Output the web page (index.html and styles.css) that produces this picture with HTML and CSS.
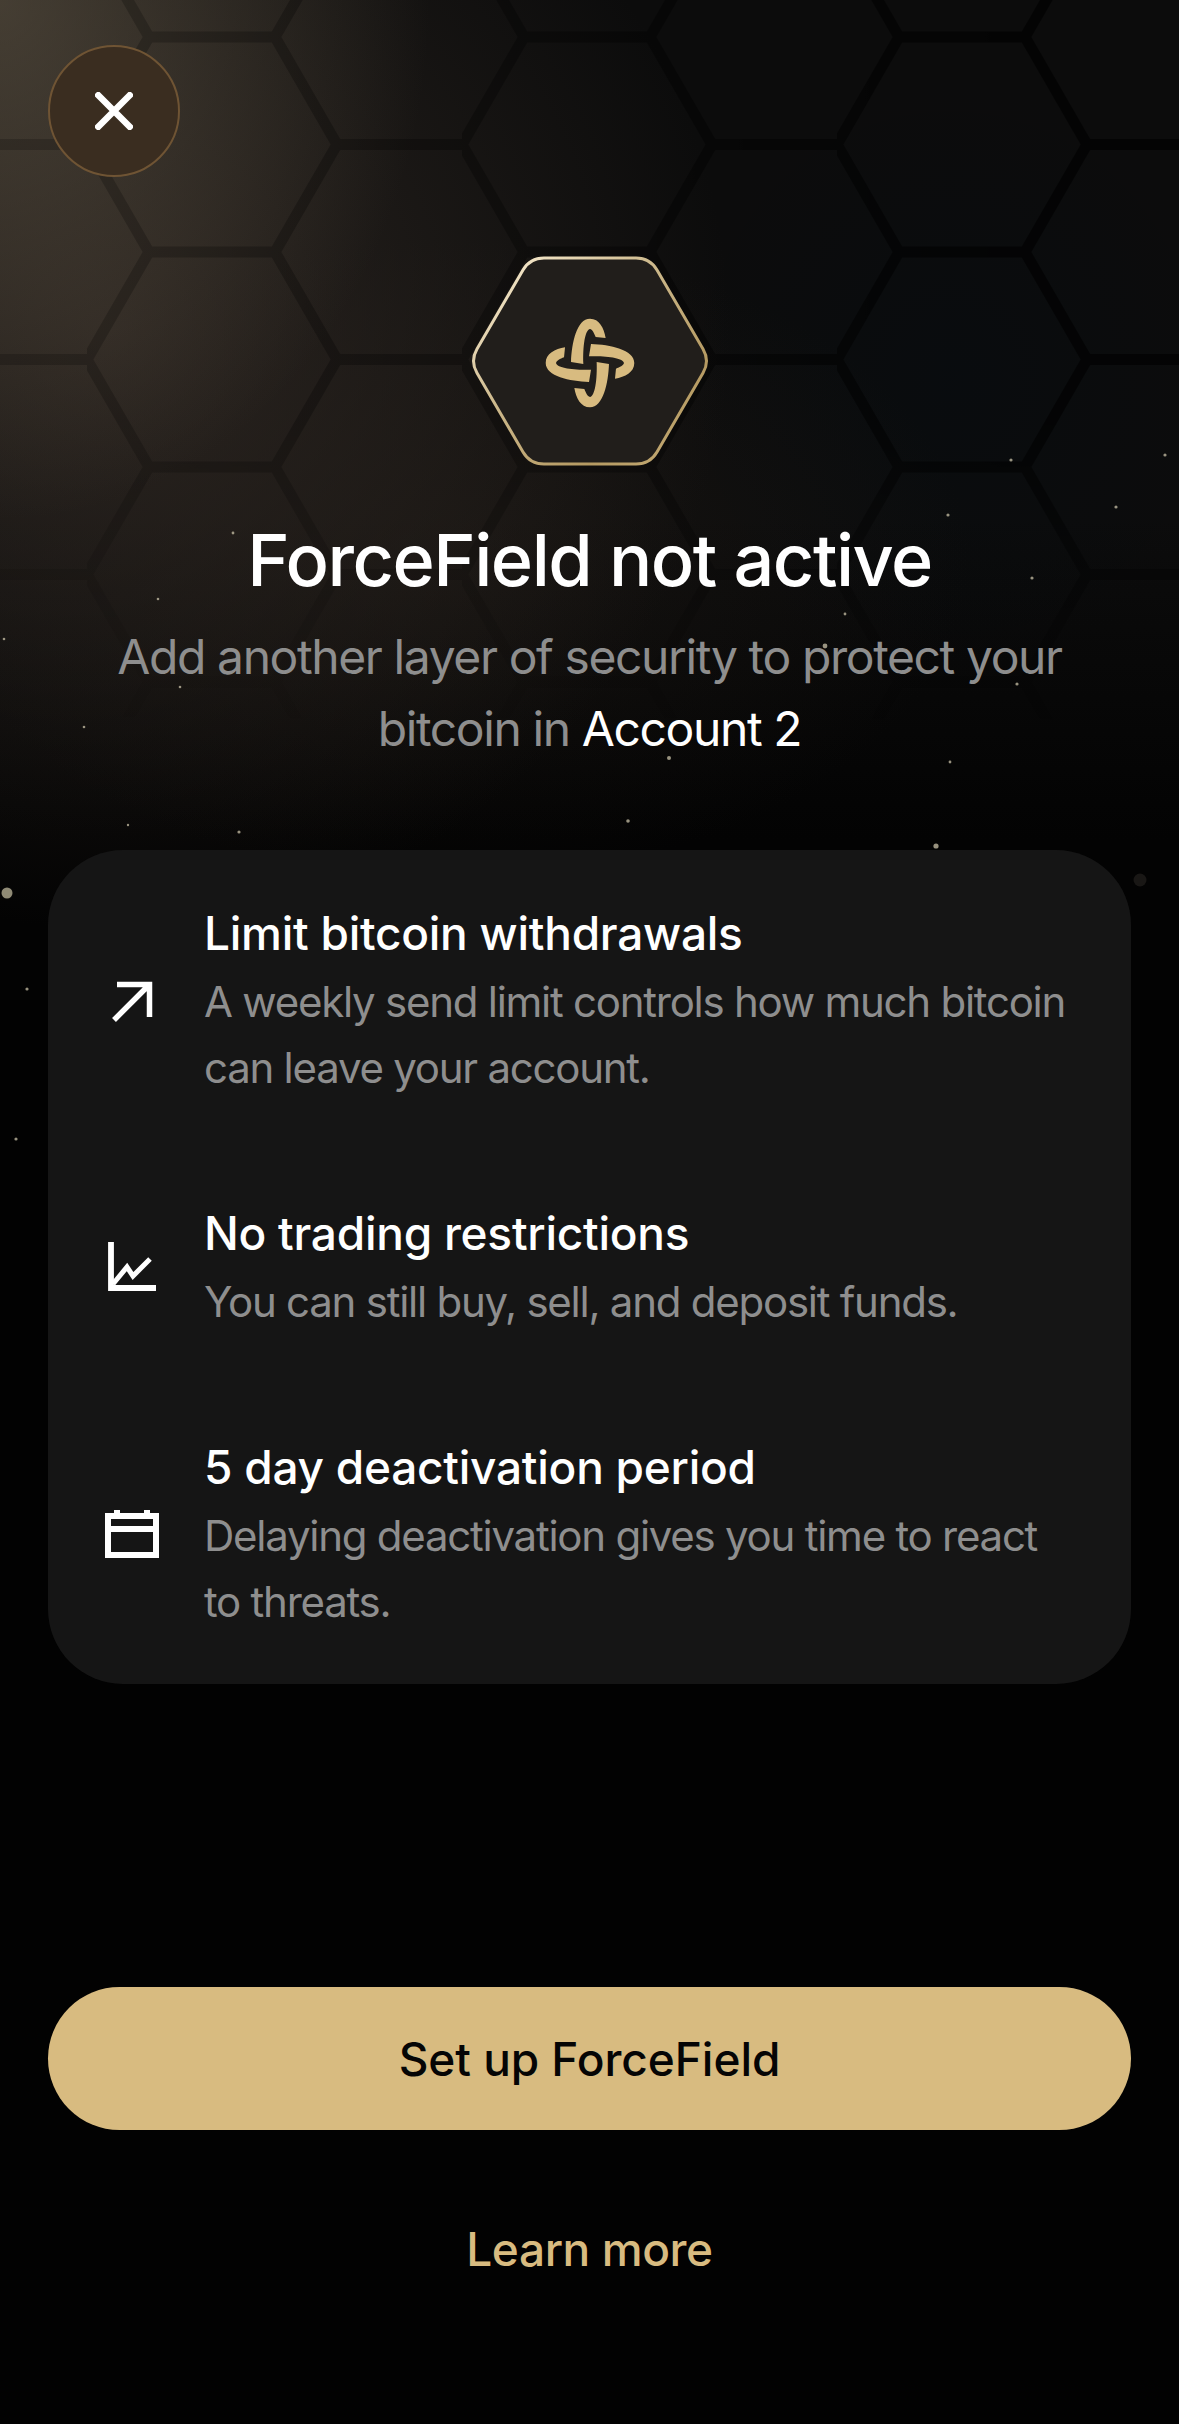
FILE: index.html
```html
<!DOCTYPE html>
<html>
<head>
	<meta charset="utf-8">
	<title>ForceField not active</title>
	<link rel="stylesheet" href="styles.css">
</head>
<body>
	<div class="glow"></div>
	<svg class="backdrop" width="1179" height="1200" viewBox="0 0 1179 1200">
		<defs>
			<pattern id="cells" width="375" height="215" patternUnits="userSpaceOnUse" patternTransform="translate(87 37)">
				<path d="M62 0L0 107.5L62 215M188 0L250 107.5L188 215M62 0H188M62 215H188M250 107.5H375" fill="none" stroke="#000" stroke-width="11" stroke-linejoin="round"/>
			</pattern>
			<linearGradient id="fadeDown" x1="0" y1="0" x2="0" y2="1">
				<stop offset="0" stop-color="#fff"/>
				<stop offset=".35" stop-color="#fff"/>
				<stop offset=".6" stop-color="#000"/>
			</linearGradient>
			<linearGradient id="fadeAcross" x1="0" y1="0" x2="1" y2="0">
				<stop offset="0" stop-color="#303030"/>
				<stop offset=".5" stop-color="#505050"/>
				<stop offset=".85" stop-color="#989898"/>
			</linearGradient>
			<mask id="maskDown"><rect width="1179" height="1200" fill="url(#fadeDown)"/></mask>
			<mask id="maskAcross"><rect width="1179" height="1200" fill="url(#fadeAcross)"/></mask>
		</defs>
		<g mask="url(#maskDown)">
			<rect width="1179" height="1200" fill="url(#cells)" mask="url(#maskAcross)"/>
		</g>
		<g fill="#c9c2a8" fill-opacity=".75">
			<circle cx="1165" cy="455" r="1.6"/>
			<circle cx="1011" cy="460" r="1.6"/>
			<circle cx="948" cy="515" r="1.6"/>
			<circle cx="1116" cy="507" r="1.6"/>
			<circle cx="233" cy="533" r="1.4"/>
			<circle cx="1032" cy="578" r="1.6"/>
			<circle cx="158" cy="599" r="1.3"/>
			<circle cx="845" cy="614" r="1.4"/>
			<circle cx="825" cy="646" r="2.4"/>
			<circle cx="4" cy="639" r="1.3"/>
			<circle cx="180" cy="687" r="1.3"/>
			<circle cx="1017" cy="684" r="1.6"/>
			<circle cx="84" cy="727" r="1.3"/>
			<circle cx="669" cy="758" r="2"/>
			<circle cx="950" cy="762" r="1.4"/>
			<circle cx="628" cy="821" r="1.8"/>
			<circle cx="128" cy="825" r="1.2"/>
			<circle cx="239" cy="832" r="1.6"/>
			<circle cx="936" cy="846" r="2.6"/>
			<circle cx="27" cy="989" r="1.6"/>
			<circle cx="16" cy="1139" r="1.6"/>
		</g>
		<circle cx="7" cy="893" r="5.5" fill="#8f8a75"/>
		<circle cx="1140" cy="880" r="6.5" fill="#191715"/>
	</svg>

	<div class="page">
		<button class="close">
			<svg width="38" height="38" viewBox="0 0 38 38"><path d="M1 1L37 37M37 1L1 37" stroke="#fff" stroke-width="6.5" fill="none"/></svg>
		</button>

		<div class="shield">
			<svg width="240" height="212" viewBox="0 0 240 212">
				<defs>
					<linearGradient id="rim" x1="0" y1="0" x2="1" y2="1">
						<stop offset="0" stop-color="#fff4dc"/>
						<stop offset=".4" stop-color="#cdb98c"/>
						<stop offset=".75" stop-color="#b59a62"/>
						<stop offset="1" stop-color="#c9b07a"/>
					</linearGradient>
				</defs>
				<path d="M7 94L53 15Q60 3 74 3L166 3Q180 3 187 15L233 94Q240 106 233 118L187 197Q180 209 166 209L74 209Q60 209 53 197L7 118Q0 106 7 94Z" fill="#211e1b" stroke="url(#rim)" stroke-width="3"/>
				<g transform="translate(120 108) scale(.333)" fill="#d8bb80">
					<path id="arm" d="M-57 -3C-55 -60 -40 -133 0 -133C28 -133 42 -105 47 -75L17 -78C12 -90 8 -100 0 -102C-15 -100 -22 -50 -20 3Z"/>
					<use href="#arm" transform="rotate(90)"/>
					<use href="#arm" transform="rotate(180)"/>
					<use href="#arm" transform="rotate(270)"/>
				</g>
			</svg>
		</div>

		<h1>ForceField not active</h1>
		<p class="lead">Add another layer of security to protect your bitcoin in <span class="account">Account 2</span></p>

		<div class="card">
			<div class="row">
				<svg class="icon" width="60" height="60" viewBox="0 0 60 60">
					<path d="M15 14.5H47.5V47M47.5 14.5L12 50" fill="none" stroke="#fff" stroke-width="5.5"/>
				</svg>
				<div class="copy">
					<h2>Limit bitcoin withdrawals</h2>
					<p>A weekly send limit controls how much bitcoin can leave your account.</p>
				</div>
			</div>
			<div class="row">
				<svg class="icon" width="60" height="60" viewBox="0 0 60 60">
					<path d="M9 5V51H54" fill="none" stroke="#fff" stroke-width="5.8"/>
					<path d="M11 47L25 30L31 39L48 22" fill="none" stroke="#fff" stroke-width="5"/>
				</svg>
				<div class="copy">
					<h2>No trading restrictions</h2>
					<p>You can still buy, sell, and deposit funds.</p>
				</div>
			</div>
			<div class="row">
				<svg class="icon" width="60" height="60" viewBox="0 0 60 60">
					<path d="M6 12H54V51H6ZM6 25H54" fill="none" stroke="#fff" stroke-width="6"/>
					<path d="M15 6V12M45 6V12" fill="none" stroke="#fff" stroke-width="6"/>
				</svg>
				<div class="copy">
					<h2>5 day deactivation period</h2>
					<p>Delaying deactivation gives you time to react to threats.</p>
				</div>
			</div>
		</div>

		<button class="primary">Set up ForceField</button>
		<a class="learn">Learn more</a>
	</div>
</body>
</html>
```

FILE: styles.css
```css
html {
	height: 100%;
	background: #020202;
}
body {
	margin: 0;
	height: 2424px;
	overflow: hidden;
	position: relative;
	background: #020202;
	font-family: "Inter", "Liberation Sans", sans-serif;
	color: #fff;
}

/* decoration behind the content */
.glow {
	position: absolute;
	left: 0;
	top: 0;
	width: 1179px;
	height: 1000px;
	background:
		radial-gradient(ellipse 430px 520px at 0 0, rgba(105, 94, 76, .55), rgba(105, 94, 76, 0) 100%),
		radial-gradient(ellipse 620px 600px at 110px 330px, rgba(52, 44, 38, .75), rgba(52, 44, 38, 0) 100%),
		radial-gradient(ellipse 520px 320px at 450px 560px, rgba(34, 28, 23, .45), rgba(34, 28, 23, 0) 100%),
		radial-gradient(ellipse 280px 300px at 950px 380px, rgba(4, 12, 18, .4), rgba(4, 12, 18, 0) 100%),
		linear-gradient(#0c0c0c 0, #0c0c0c 520px, #030303 840px);
}
.backdrop {
	position: absolute;
	left: 0;
	top: 0;
}

.page {
	position: relative;
	display: flex;
	flex-direction: column;
	padding: 45px 48px 0;
}

.close {
	width: 132px;
	height: 132px;
	padding: 0;
	border: 2.5px solid #6f5434;
	border-radius: 50%;
	background: #3a2d20;
	display: flex;
	align-items: center;
	justify-content: center;
}
.close svg {
	display: block;
}

.shield {
	margin-top: 78px;
	display: flex;
	justify-content: center;
}
.shield svg {
	display: block;
}

h1 {
	margin: 49px 0 0;
	font-size: 72px;
	line-height: 88px;
	font-weight: 500;
	letter-spacing: -1.5px;
	text-align: center;
}
.lead {
	margin: 17px 40px 0;
	font-size: 48px;
	line-height: 72px;
	letter-spacing: -1.4px;
	text-align: center;
	color: #8e8e8e;
}
.account {
	color: #fff;
}

.card {
	margin-top: 85px;
	padding: 48px 0 49px;
	background: #151515;
	border-radius: 75px;
	display: flex;
	flex-direction: column;
	gap: 97px;
}
.row {
	display: flex;
	align-items: center;
	padding-left: 54px;
	gap: 42px;
}
.icon {
	flex: none;
	display: block;
}
.copy h2 {
	margin: 0;
	font-size: 46px;
	line-height: 71px;
	font-weight: 500;
	letter-spacing: -.25px;
}
.copy p {
	margin: 0;
	width: 870px;
	font-size: 42px;
	line-height: 66px;
	letter-spacing: -1.25px;
	color: #8e8e8e;
}

.primary {
	margin-top: 303px;
	height: 143px;
	border: 0;
	border-radius: 72px;
	background: #d8bb80;
	color: #050505;
	font-family: inherit;
	font-size: 46px;
	font-weight: 500;
	letter-spacing: -.05px;
}
.learn {
	margin-top: 85px;
	line-height: 68px;
	font-size: 46px;
	font-weight: 500;
	letter-spacing: -.4px;
	text-align: center;
	color: #d8bb80;
}
```
